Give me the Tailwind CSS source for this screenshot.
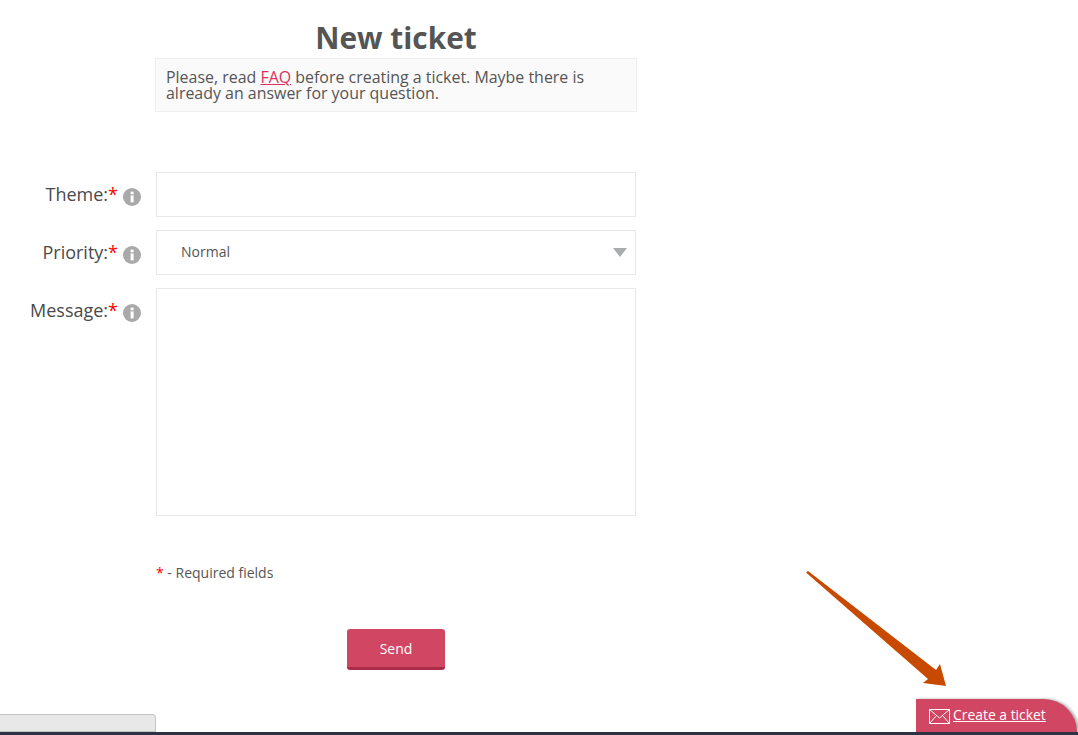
<!DOCTYPE html>
<html lang="en">
<head>
    <meta charset="UTF-8">
    <meta name="viewport" content="width=device-width, initial-scale=1.0">
    <title>New ticket</title>
    <script src="https://cdn.jsdelivr.net/npm/@tailwindcss/browser@4"></script>
</head>
<body class="bg-white font-['Open_Sans',sans-serif] text-[#555] h-[735px] overflow-hidden relative">

  <div class="h-[699px] w-[637px] pl-[155px]">
    <h1 class="text-[29.8px] leading-[40px] font-bold text-center pt-[18px] h-[58px]">New ticket</h1>

    <div class="border border-[#eeeeee] bg-[#fafafa] h-[54px] pl-[10px] pt-[10px] text-[15.95px] leading-[16px]">
      Please, read <a href="#" class="text-[#d9325a] underline">FAQ</a> before creating a ticket. Maybe there is<br>already an answer for your question.
    </div>

    <form class="mt-[60px] flex flex-col gap-[13px] -ml-[155px]">
      <div class="flex">
        <label class="w-[156px] h-[45px] flex justify-end pt-[9px] pr-[15px] text-[18px] leading-[26px] text-[#4a4a4a]">Theme:<span class="text-[#ff0000]">*</span>
          <svg class="w-[18px] h-[18px] mt-[7px] ml-[5px]" viewBox="0 0 18 18"><circle cx="9" cy="9" r="9" fill="#a9a9a9"/><rect x="7.6" y="7.4" width="3" height="7" fill="#fff"/><rect x="7.6" y="3.6" width="3" height="2.6" fill="#fff"/></svg>
        </label>
        <input type="text" class="w-[480px] h-[45px] border border-[#e8e8e8] bg-white">
      </div>
      <div class="flex">
        <label class="w-[156px] h-[45px] flex justify-end pt-[9px] pr-[15px] text-[18px] leading-[26px] text-[#4a4a4a]">Priority:<span class="text-[#ff0000]">*</span>
          <svg class="w-[18px] h-[18px] mt-[7px] ml-[5px]" viewBox="0 0 18 18"><circle cx="9" cy="9" r="9" fill="#a9a9a9"/><rect x="7.6" y="7.4" width="3" height="7" fill="#fff"/><rect x="7.6" y="3.6" width="3" height="2.6" fill="#fff"/></svg>
        </label>
        <div class="w-[480px] h-[45px] border border-[#e8e8e8] bg-white flex items-center justify-between pl-[24px] pr-[8px] pb-[2px] text-[14px]">
          <span>Normal</span>
          <svg class="w-[14px] h-[9px] mt-[2px]" viewBox="0 0 14 9"><path d="M0 0H14L7 9Z" fill="#a9adad"/></svg>
        </div>
      </div>
      <div class="flex">
        <label class="w-[156px] h-[45px] flex justify-end pt-[9px] pr-[15px] text-[18px] leading-[26px] text-[#4a4a4a]">Message:<span class="text-[#ff0000]">*</span>
          <svg class="w-[18px] h-[18px] mt-[7px] ml-[5px]" viewBox="0 0 18 18"><circle cx="9" cy="9" r="9" fill="#a9a9a9"/><rect x="7.6" y="7.4" width="3" height="7" fill="#fff"/><rect x="7.6" y="3.6" width="3" height="2.6" fill="#fff"/></svg>
        </label>
        <textarea class="w-[480px] h-[228px] border border-[#e8e8e8] bg-white resize-none"></textarea>
      </div>
    </form>

    <p class="mt-[47px] ml-[1px] text-[14px] leading-[20px]"><span class="text-[#ff0000]">*</span> - Required fields</p>

    <div class="mt-[46px] flex justify-center">
      <button class="w-[98px] h-[41px] rounded-[3px] bg-[#d14662] border-b-[3px] border-[#ab2d49] text-white text-[14px]">Send</button>
    </div>
  </div>

  <div class="flex justify-between items-end h-[33px]">
    <div class="w-[156px] h-[18px] bg-[#e8e8e8] border border-l-0 border-[#c4c4c4] rounded-tr-[4px]"></div>
    <a href="#" class="w-[161px] h-[33px] mr-[1px] bg-[#d14662] rounded-tr-[40px] shadow-[2px_0_3px_rgba(0,0,0,0.35)] flex items-center gap-[3px] pl-[13px] text-white text-[13.9px]">
      <svg class="w-[21px] h-[15px] mt-[1px]" viewBox="0 0 21 15" fill="none" stroke="#fff" stroke-width="1"><rect x="0.5" y="0.5" width="20" height="14"/><path d="M0.5 0.5L10.5 9L20.5 0.5M0.5 14.5L7.5 6.5M20.5 14.5L13.5 6.5"/></svg>
      <span class="underline -mt-[1px]">Create a ticket</span>
    </a>
  </div>

  <div class="absolute left-0 right-0 bottom-0 h-[3px] bg-[#2d3340]"></div>

  <svg class="absolute left-[800px] top-[565px] w-[150px] h-[125px]" viewBox="0 0 150 125"><path d="M6 7.5L8 6L136 105L140 99L146 121L123 118L128 114Z" fill="#c84a00"/></svg>

</body>
</html>
